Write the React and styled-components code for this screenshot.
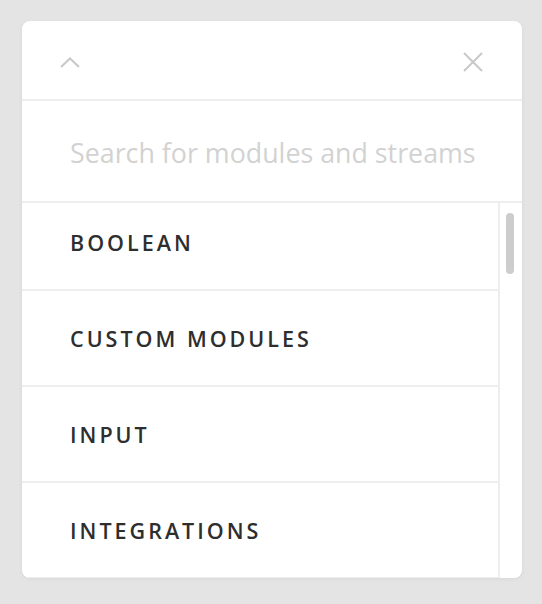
import React, { useLayoutEffect, useRef } from "react";
import styled, { createGlobalStyle } from "styled-components";

const Global = createGlobalStyle`
  html, body { margin: 0; padding: 0; background: #e4e4e4; }
  body { font-family: "Open Sans", "Noto Sans", Arial, sans-serif; }
  * { box-sizing: border-box; }
`;

const Page = styled.div`
  padding: 21px 20px 26px 22px;
  height: 604px;
`;

const Card = styled.div`
  width: 500px;
  height: 557px;
  background: #ffffff;
  border-radius: 8px;
  box-shadow: 0 1px 4px rgba(0, 0, 0, 0.06);
  display: flex;
  flex-direction: column;
  overflow: hidden;
`;

const Header = styled.div`
  height: 80px;
  flex: none;
  display: flex;
  align-items: center;
  justify-content: space-between;
  padding: 4px 39px 0 38px;
  border-bottom: 2px solid #eeeeee;
`;

const IconButton = styled.button`
  width: 20px;
  height: 20px;
  padding: 0;
  border: 0;
  background: none;
  display: flex;
  align-items: center;
  justify-content: center;
  color: #c8c8c8;
  cursor: pointer;
`;

const SearchBox = styled.div`
  height: 102px;
  flex: none;
  display: flex;
  align-items: center;
  padding: 2px 16px 0 48px;
  border-bottom: 2px solid #eeeeee;
`;

const SearchInput = styled.input`
  width: 100%;
  border: 0;
  outline: none;
  padding: 0;
  font-family: "Open Sans", "Noto Sans", Arial, sans-serif;
  font-size: 26.8px;
  color: #333;
  background: transparent;
  &::placeholder { color: #d2d2d2; }
`;

const ListArea = styled.div`
  flex: 1;
  min-height: 0;
  display: flex;
`;

const List = styled.div`
  flex: 1;
  overflow: hidden;
  border-right: 2px solid #eeeeee;
`;

const Row = styled.div`
  height: 96px;
  display: flex;
  align-items: center;
  padding: 1px 0 0 48px;
  border-bottom: 2px solid #eeeeee;
  font-size: 21.5px;
  font-weight: 600;
  letter-spacing: 3px;
  color: #2e2e2e;
  text-transform: uppercase;
`;

const Track = styled.div`
  width: 22px;
  flex: none;
  padding: 10px 0 0 6px;
`;

const Thumb = styled.div`
  width: 8px;
  height: 61px;
  border-radius: 4px;
  background: #cdcdcd;
`;

const items = ["Boolean", "Custom Modules", "Input", "Integrations"];

export default function App() {
  const listRef = useRef(null);
  useLayoutEffect(() => {
    if (listRef.current) listRef.current.scrollTop = 8;
  }, []);
  return (
    <>
      <Global />
      <Page>
        <Card>
          <Header>
            <IconButton aria-label="Collapse">
              <svg width="20" height="11" viewBox="0 0 20 11" fill="none" stroke="currentColor" strokeWidth="2">
                <polyline points="1,10 10,1.5 19,10" />
              </svg>
            </IconButton>
            <IconButton aria-label="Close">
              <svg width="20" height="20" viewBox="0 0 20 20" fill="none" stroke="currentColor" strokeWidth="2">
                <line x1="1" y1="1" x2="19" y2="19" />
                <line x1="19" y1="1" x2="1" y2="19" />
              </svg>
            </IconButton>
          </Header>
          <SearchBox>
            <SearchInput placeholder="Search for modules and streams" />
          </SearchBox>
          <ListArea>
            <List ref={listRef}>
              {items.map((it) => (
                <Row key={it}>{it}</Row>
              ))}
            </List>
            <Track>
              <Thumb />
            </Track>
          </ListArea>
        </Card>
      </Page>
    </>
  );
}
